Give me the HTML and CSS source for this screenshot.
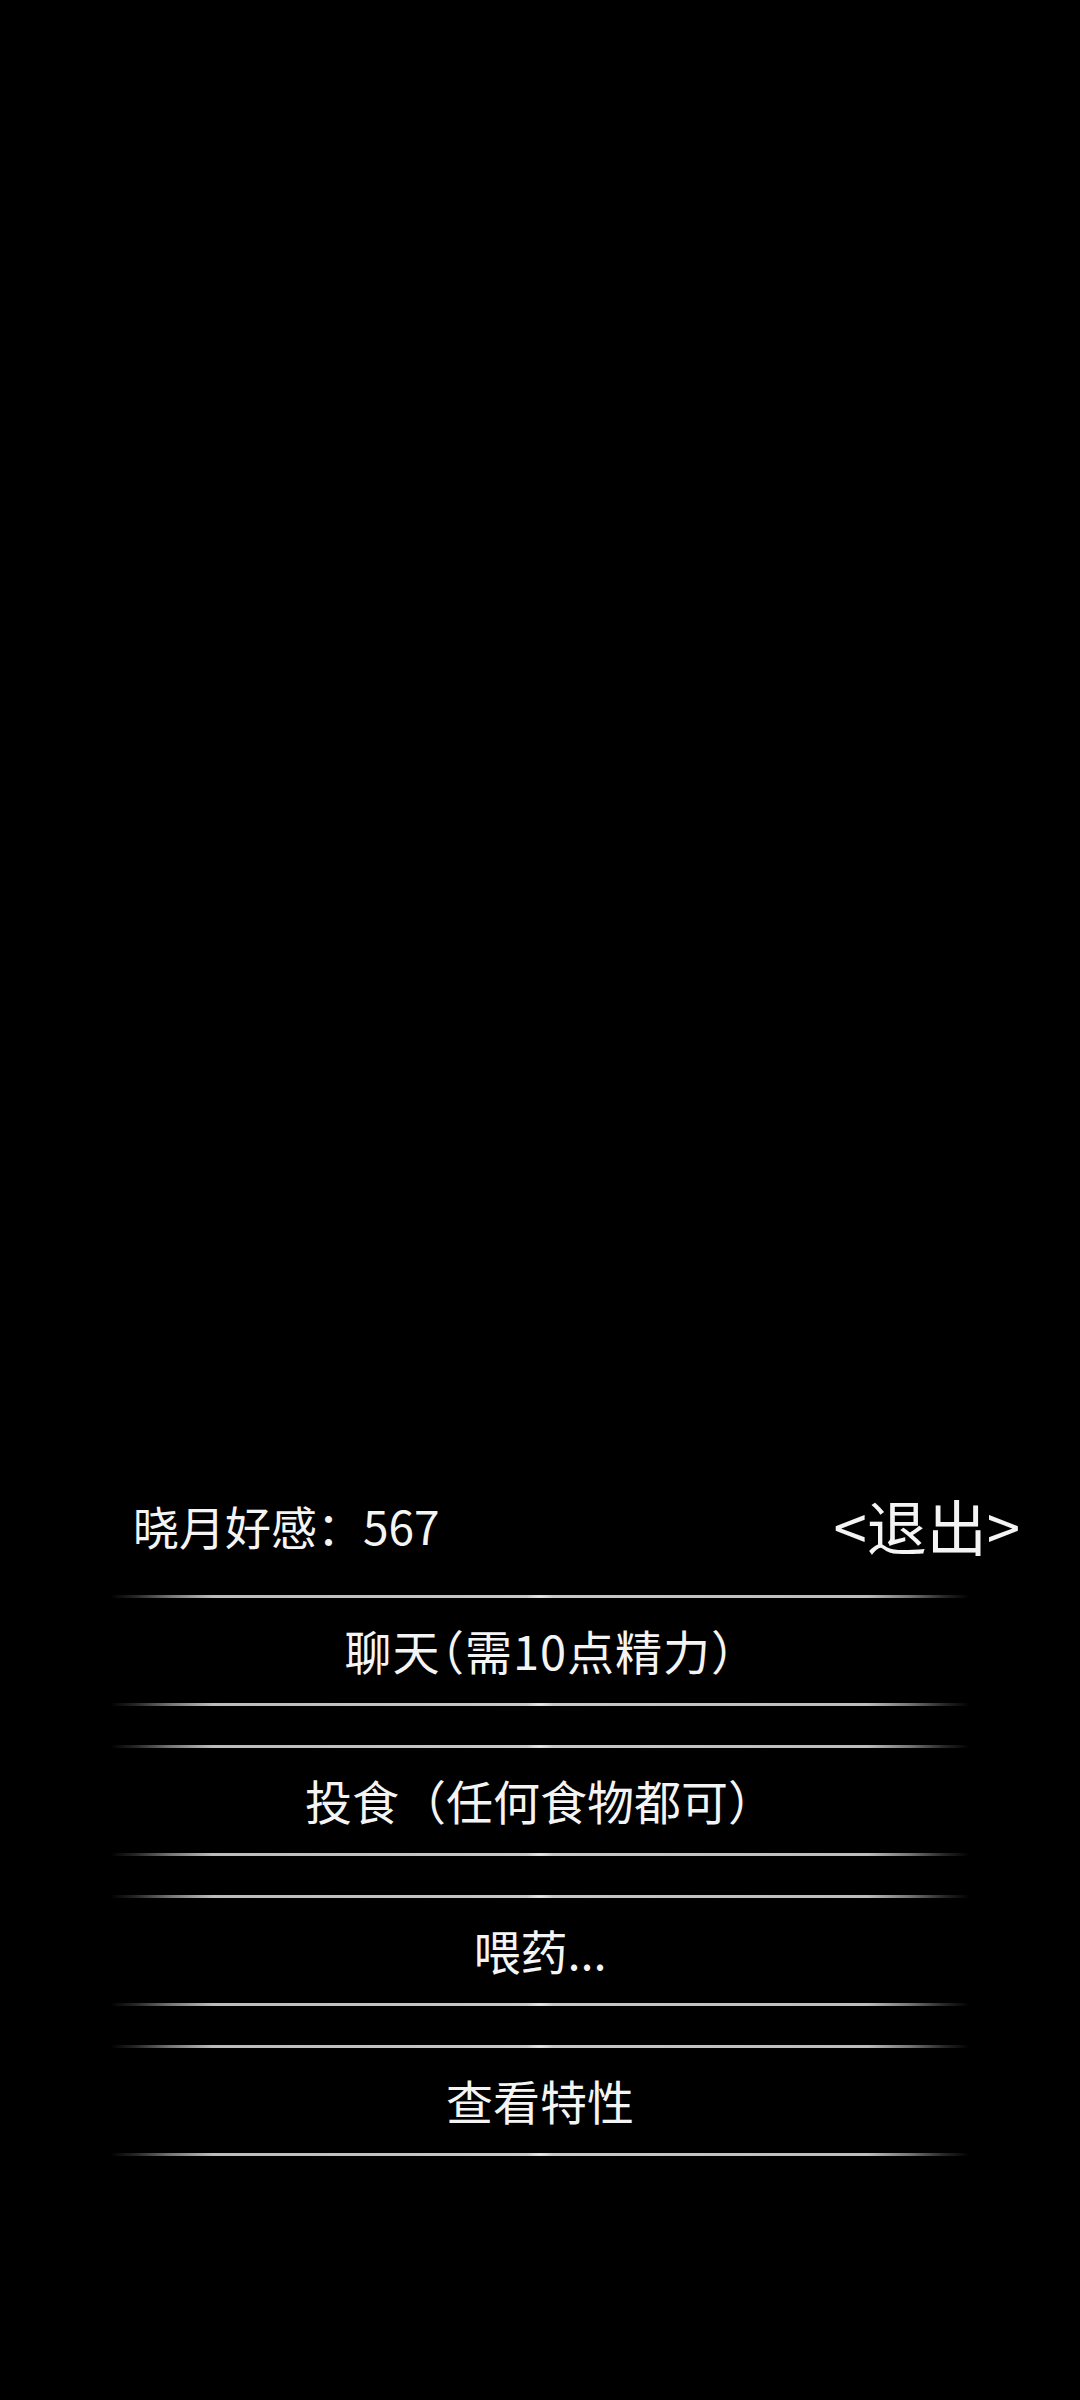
FILE: index.html
```html
<!DOCTYPE html>
<html lang="zh-CN">
<head>
<meta charset="utf-8">
<title>晓月</title>
<link rel="stylesheet" href="styles.css">
</head>
<body>
<main class="screen">
  <section class="panel">
    <header class="panel-head">
      <span class="affinity">晓月好感：567</span>
      <span class="exit">&lt;退出&gt;</span>
    </header>
    <nav class="menu">
      <div class="menu-item"><span class="label label-tight">聊天（需10点精力）</span></div>
      <div class="menu-item"><span class="label">投食（任何食物都可）</span></div>
      <div class="menu-item"><span class="label">喂药...</span></div>
      <div class="menu-item"><span class="label">查看特性</span></div>
    </nav>
  </section>
</main>
</body>
</html>
```
FILE: styles.css
```css
html, body {
  margin: 0;
  padding: 0;
  background: #000;
}

body {
  font-family: "Noto Sans CJK SC", "Noto Sans", sans-serif;
  color: #f4f4f4;
}

.screen {
  width: 1080px;
  height: 2400px;
  display: flex;
  flex-direction: column;
}

.panel {
  margin-top: 1495px;
  display: flex;
  flex-direction: column;
}

.panel-head {
  height: 60px;
  display: flex;
  align-items: center;
  justify-content: space-between;
  padding: 0 60px 0 133px;
  margin-bottom: 40px;
}

.affinity {
  font-size: 46px;
  line-height: 60px;
}

.exit {
  font-size: 60px;
  line-height: 60px;
}

.menu {
  display: flex;
  flex-direction: column;
  gap: 39px;
}

.menu-item {
  height: 111px;
  display: flex;
  flex-direction: column;
}

/* glowing rule above and below each option, fading out at both ends */
.menu-item::before,
.menu-item::after {
  content: "";
  display: block;
  height: 3px;
  margin: 0 110px;
  background:
    radial-gradient(ellipse 14px 3px at 50% 50%, rgba(255,255,255,0.6), rgba(255,255,255,0) 100%),
    linear-gradient(to right,
      rgba(190,190,190,0) 0%,
      rgba(190,190,190,0.2) 3%,
      rgba(194,194,194,0.6) 7%,
      rgba(198,198,198,0.95) 12%,
      rgba(200,200,200,1) 50%,
      rgba(198,198,198,0.95) 88%,
      rgba(194,194,194,0.6) 93%,
      rgba(190,190,190,0.2) 97%,
      rgba(190,190,190,0) 100%);
}

.label {
  flex: 1;
  display: flex;
  align-items: center;
  justify-content: center;
  font-size: 47px;
  line-height: 60px;
  padding-bottom: 2px;
}

/* the energy-cost option sets its brackets a little closer */
.label-tight {
  font-feature-settings: "halt";
  letter-spacing: 1px;
}
```
